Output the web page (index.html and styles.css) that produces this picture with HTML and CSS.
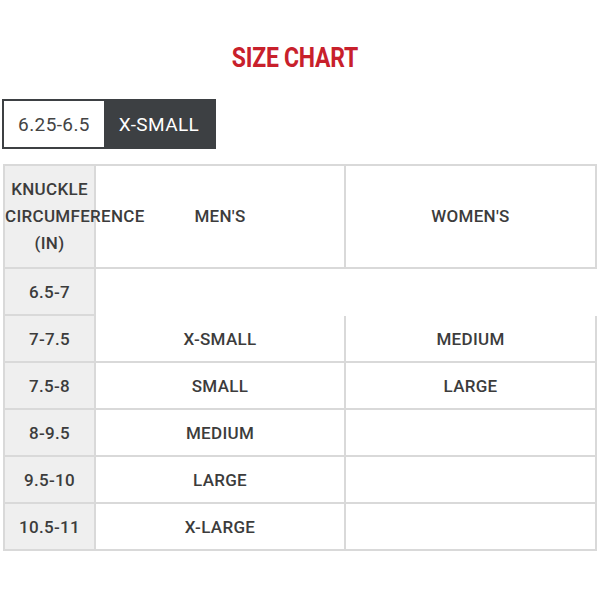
FILE: index.html
```html
<!DOCTYPE html>
<html>
<head>
<meta charset="utf-8">
<link rel="stylesheet" href="styles.css">
</head>
<body>
<h1 class="title"><span>SIZE CHART</span></h1>
<div class="tabs">
  <div class="tab tab-light">6.25-6.5</div>
  <div class="tab tab-dark">X-SMALL</div>
</div>
<table class="chart">
  <colgroup>
    <col class="c1"><col class="c2"><col class="c3">
  </colgroup>
  <tr class="head">
    <th class="k">KNUCKLE<br>CIRCUMFERENCE<br>(IN)</th>
    <th>MEN'S</th>
    <th>WOMEN'S</th>
  </tr>
  <tr>
    <td class="k">6.5-7</td>
    <td colspan="2" class="blank"></td>
  </tr>
  <tr class="notop">
    <td class="k top">7-7.5</td>
    <td>X-SMALL</td>
    <td>MEDIUM</td>
  </tr>
  <tr>
    <td class="k">7.5-8</td>
    <td>SMALL</td>
    <td>LARGE</td>
  </tr>
  <tr>
    <td class="k">8-9.5</td>
    <td>MEDIUM</td>
    <td></td>
  </tr>
  <tr>
    <td class="k">9.5-10</td>
    <td>LARGE</td>
    <td></td>
  </tr>
  <tr>
    <td class="k">10.5-11</td>
    <td>X-LARGE</td>
    <td></td>
  </tr>
</table>
</body>
</html>
```
FILE: styles.css
```css
html, body {
  margin: 0;
  padding: 0;
  background: #fff;
}
body {
  font-family: Roboto, "Liberation Sans", sans-serif;
  color: #3a3a3a;
  width: 600px;
}
.title {
  margin: 0;
  padding-top: 40px;
  height: 99px;
  box-sizing: border-box;
  text-align: center;
  font-size: 28px;
  line-height: 36px;
  font-weight: 700;
  color: #c8202b;
}
.title span {
  display: inline-block;
  transform: scaleX(0.82);
  letter-spacing: -0.3px;
  margin-left: -10px;
}
.tabs {
  display: flex;
  margin-left: 2px;
  width: 214px;
  height: 50px;
  box-sizing: border-box;
  border: 2px solid #3d4043;
}
.tab {
  display: flex;
  align-items: center;
  justify-content: center;
  font-size: 19px;
  letter-spacing: 0.4px;
}
.tab-light {
  width: 100px;
  background: #fff;
  color: #444;
}
.tab-dark {
  flex: 1;
  background: #3d4043;
  color: #fff;
}
.chart {
  margin-top: 15px;
  margin-left: 3px;
  border-collapse: collapse;
  table-layout: fixed;
  width: 592px;
}
.c1 { width: 91px; }
.c2 { width: 250px; }
.c3 { width: 251px; }
.chart th, .chart td {
  border: 2px solid #d9d9d9;
  text-align: center;
  vertical-align: middle;
  font-size: 17px;
  font-weight: 500;
  color: #3c3c3c;
  height: 45px;
  padding: 0;
  letter-spacing: 0.3px;
}
.chart .head th {
  height: 101px;
  line-height: 27px;
}
.chart .k {
  background: #efefef;
  white-space: nowrap;
  overflow: visible;
}
.chart th.k {
  text-align: center;
  position: relative;
  z-index: 1;
}
.chart td.blank {
  border-right-color: #fff;
  border-bottom-color: #fff;
}
.chart tr.notop td {
  border-top-color: #fff;
}
.chart tr.notop td.k {
  border-top-color: #d9d9d9;
}
```
